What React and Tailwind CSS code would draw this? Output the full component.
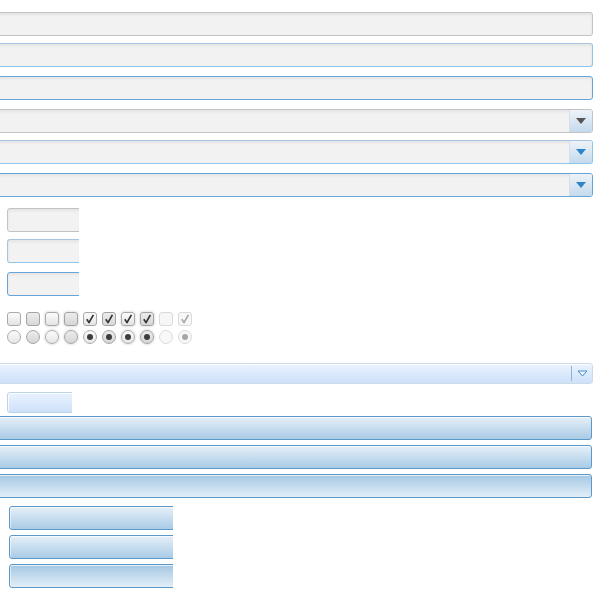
import React from "react";

function Input({ variant, className = "" }) {
  const border =
    variant === "hover"
      ? "border-[#a8c4e0] border-b-[#8fc6ea] border-r-[#8fc6ea]"
      : variant === "focus"
      ? "border-[#67a4d7]"
      : "border-[#c3c3c6]";
  return (
    <div
      className={`h-[24px] rounded-[3px] border bg-[#f2f2f2] shadow-[inset_0_2px_3px_rgba(0,0,0,0.06)] ${border} ${className}`}
    />
  );
}

function Combo({ variant }) {
  const border =
    variant === "hover"
      ? "border-[#a8c4e0] border-b-[#8fc6ea] border-r-[#8fc6ea]"
      : variant === "focus"
      ? "border-[#67a4d7]"
      : "border-[#c3c3c6]";
  const tri = variant === "normal" ? "#555555" : "#2f83c9";
  return (
    <div
      className={`-ml-[4px] flex h-[24px] w-[597px] overflow-hidden rounded-[3px] border bg-[#f2f2f2] shadow-[inset_0_2px_3px_rgba(0,0,0,0.06)] ${border}`}
    >
      <div className="flex-1" />
      <div className="flex w-[23px] items-center justify-center border-l border-[#d6dfe8] bg-gradient-to-b from-[#eef3f8] to-[#c4daed]">
        <svg width="10" height="6" viewBox="0 0 10 6">
          <polygon points="0,0 10,0 5,6" fill={tri} />
        </svg>
      </div>
    </div>
  );
}

function Check({ kind, checked }) {
  const styles = {
    normal: "border-[#a9a9a9] bg-gradient-to-b from-[#fbfbfb] to-[#e4e4e4]",
    hover: "border-[#a3a3a3] bg-gradient-to-b from-[#ececec] to-[#d8d8d8]",
    glow: "border-[#a9a9a9] bg-gradient-to-b from-[#fbfbfb] to-[#e4e4e4] shadow-[0_0_3px_rgba(0,0,0,0.22)]",
    glowhover: "border-[#a3a3a3] bg-gradient-to-b from-[#ececec] to-[#d6d6d6] shadow-[0_0_3px_rgba(0,0,0,0.22)]",
    disabled: "border-[#dadada] bg-[#f7f7f7]",
  };
  const color = kind === "disabled" ? "#a8a8a8" : "#333333";
  return (
    <div className={`flex h-[14px] w-[14px] items-center justify-center rounded-[3px] border ${styles[kind]}`}>
      {checked && (
        <svg width="10" height="10" viewBox="0 0 10 10">
          <path d="M1.8 5.2 L4 8.6 L8.4 0.8" fill="none" stroke={color} strokeWidth="1.7" strokeLinejoin="round" />
        </svg>
      )}
    </div>
  );
}

function Radio({ kind, checked }) {
  const styles = {
    normal: "border-[#adadad] bg-gradient-to-b from-[#fbfbfb] to-[#e6e6e6]",
    hover: "border-[#a5a5a5] bg-gradient-to-b from-[#ececec] to-[#d6d6d6]",
    glow: "border-[#adadad] bg-gradient-to-b from-[#fbfbfb] to-[#e6e6e6] shadow-[0_0_3px_rgba(0,0,0,0.22)]",
    glowhover: "border-[#a5a5a5] bg-gradient-to-b from-[#ececec] to-[#d6d6d6] shadow-[0_0_3px_rgba(0,0,0,0.22)]",
    disabled: "border-[#dcdcdc] bg-[#f8f8f8]",
  };
  const dot = kind === "disabled" ? "bg-[#a6a6a6]" : "bg-[#3d3d3d]";
  return (
    <div className={`flex h-[14px] w-[14px] items-center justify-center rounded-full border ${styles[kind]}`}>
      {checked && <div className={`h-[6px] w-[6px] rounded-full ${dot}`} />}
    </div>
  );
}

function BigButton({ pressed, className = "" }) {
  const grad = pressed
    ? "bg-gradient-to-b from-[#a4c7e3] to-[#e2eef7]"
    : "bg-gradient-to-b from-[#e6f0f8] to-[#a9cbe6]";
  return (
    <div
      className={`h-[24px] rounded-[3px] border border-[#5c99c9] ${grad} shadow-[inset_0_1px_0_rgba(255,255,255,0.7),inset_1px_0_0_rgba(255,255,255,0.5)] ${className}`}
    />
  );
}

export default function App() {
  const kinds = ["normal", "hover", "glow", "glowhover"];
  return (
    <div className="flex h-[600px] w-[600px] flex-col overflow-hidden bg-white pt-[12px]">
      <Input variant="normal" className="-ml-[4px] w-[597px]" />
      <Input variant="hover" className="-ml-[4px] mt-[7px] w-[597px]" />
      <Input variant="focus" className="-ml-[4px] mt-[9px] w-[597px]" />

      <div className="mt-[9px]">
        <Combo variant="normal" />
      </div>
      <div className="mt-[7px]">
        <Combo variant="hover" />
      </div>
      <div className="mt-[9px]">
        <Combo variant="focus" />
      </div>

      <div className="ml-[7px] mt-[11px] w-[72px] overflow-hidden">
        <Input variant="normal" className="w-[120px]" />
      </div>
      <div className="ml-[7px] mt-[7px] w-[72px] overflow-hidden">
        <Input variant="hover" className="w-[120px]" />
      </div>
      <div className="ml-[7px] mt-[9px] w-[72px] overflow-hidden">
        <Input variant="focus" className="w-[120px]" />
      </div>

      <div className="ml-[7px] mt-[16px] flex gap-[5px]">
        {kinds.map((k) => (
          <Check key={"a" + k} kind={k} />
        ))}
        {kinds.map((k) => (
          <Check key={"b" + k} kind={k} checked />
        ))}
        <Check kind="disabled" />
        <Check kind="disabled" checked />
      </div>
      <div className="ml-[7px] mt-[4px] flex gap-[5px]">
        {kinds.map((k) => (
          <Radio key={"a" + k} kind={k} />
        ))}
        {kinds.map((k) => (
          <Radio key={"b" + k} kind={k} checked />
        ))}
        <Radio kind="disabled" />
        <Radio kind="disabled" checked />
      </div>

      <div className="-ml-[4px] mt-[19px] flex h-[21px] w-[597px] overflow-hidden rounded-[3px] border border-[#cddbe6] bg-gradient-to-b from-[#eaf3fe] to-[#cde1fa] shadow-[inset_0_1px_0_rgba(255,255,255,0.8)]">
        <div className="flex-1" />
        <div className="my-[2px] w-px bg-[#8fb3d6]" />
        <div className="flex w-[20px] items-center justify-center">
          <svg width="11" height="7" viewBox="0 0 11 7">
            <polygon points="1,1 10,1 5.5,6" fill="#e9f2fd" stroke="#4a8bc9" strokeWidth="1" />
          </svg>
        </div>
      </div>

      <div className="ml-[7px] mt-[8px] w-[65px] overflow-hidden">
        <div className="h-[21px] w-[100px] rounded-[3px] border border-[#bcd3e8] bg-gradient-to-b from-[#eaf3fe] to-[#cde1fa] shadow-[inset_1px_1px_0_rgba(255,255,255,0.8)]" />
      </div>

      <BigButton className="-ml-[4px] mt-[3px] w-[596px]" />
      <BigButton className="-ml-[4px] mt-[5px] w-[596px]" />
      <BigButton pressed className="-ml-[4px] mt-[5px] w-[596px]" />

      <div className="ml-[9px] mt-[8px] w-[164px] overflow-hidden">
        <BigButton className="w-[200px]" />
      </div>
      <div className="ml-[9px] mt-[5px] w-[164px] overflow-hidden">
        <BigButton className="w-[200px]" />
      </div>
      <div className="ml-[9px] mt-[5px] w-[164px] overflow-hidden">
        <BigButton pressed className="w-[200px]" />
      </div>
    </div>
  );
}
